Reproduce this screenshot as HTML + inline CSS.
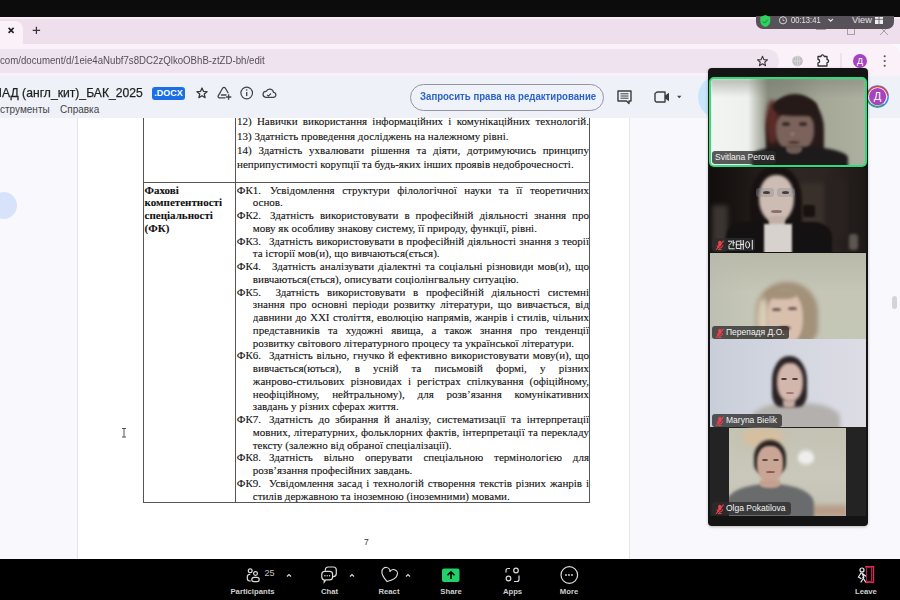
<!DOCTYPE html><html><head><meta charset="utf-8"><style>
*{margin:0;padding:0;box-sizing:border-box}
html,body{width:900px;height:600px;overflow:hidden;background:#f9f9fd;font-family:"Liberation Sans",sans-serif;position:relative}
.a{position:absolute}
.ln{position:absolute;font-family:"Liberation Serif",serif;font-size:11px;line-height:12px;height:12px;white-space:nowrap;color:#111;-webkit-text-stroke:0.1px #111}
.j{text-align:justify;text-align-last:justify;white-space:normal;overflow:hidden}
.b{font-weight:bold}
svg{position:absolute;overflow:visible}
.lbl{position:absolute;height:13px;background:rgba(45,45,45,0.78);border-radius:3px;color:#f2f2f2;font-size:8.5px;line-height:13px;white-space:nowrap;padding:0 3px}
.tb{position:absolute;color:#cfcfcf;font-size:7.7px;line-height:10px;text-align:center;width:60px;font-weight:bold}
</style></head><body>
<div class="a" style="left:0;top:0;width:900px;height:16.8px;background:#0c0c0c"></div>
<div class="a" style="left:0;top:16.8px;width:900px;height:27.2px;background:#efdfec"></div>
<div class="a" style="left:0;top:16.8px;width:900px;height:2px;background:#f7ecf4"></div>
<div class="a" style="left:-10px;top:21px;width:33px;height:23px;background:#fbf1f9;border-radius:0 8px 0 0"></div>
<svg style="left:0;top:0" width="900" height="60"><g stroke="#222" stroke-width="1.6" fill="none"><path d="M8.6 27.9L13.6 32.9M13.6 27.9L8.6 32.9"/></g><g stroke="#3d343c" stroke-width="1.25"><path d="M36.4 26.7v7.4M32.7 30.4h7.4"/></g></svg>
<div class="a" style="left:0;top:44px;width:900px;height:32px;background:#fbf2f9;border-radius:0 10px 0 0"></div>
<div class="a" style="left:-20px;top:49px;width:799px;height:24px;background:#efe3ef;border-radius:12px"></div>
<div class="a" style="left:0;top:53px;font-size:11.3px;line-height:14px;color:#554e58;white-space:nowrap;transform-origin:0 0;transform:scaleX(0.855)">com/document/d/1eie4aNubf7s8DC2zQlkoOBhB-ztZD-bh/edit</div>
<svg style="left:0;top:0" width="900" height="80"><polygon points="762.50,56.30 763.88,59.61 767.45,59.89 764.73,62.22 765.56,65.71 762.50,63.84 759.44,65.71 760.27,62.22 757.55,59.89 761.12,59.61" fill="none" stroke="#3a3a3a" stroke-width="1.1" stroke-linejoin="round"/><circle cx="797.5" cy="61" r="5.3" fill="#bdbdbd"/><g stroke="#e2e2e2" stroke-width="0.6" fill="none"><path d="M792.2 61h10.6M797.5 55.7v10.6"/><ellipse cx="797.5" cy="61" rx="2.3" ry="5.3"/></g><path d="M818 56.5h3a1.6 1.6 0 0 1 3.2 0h2.8v3a1.6 1.6 0 0 1 0 3.2v3.3h-9v-3.2a1.6 1.6 0 0 0 0-3.3z" fill="none" stroke="#333" stroke-width="1.3" stroke-linejoin="round"/><path d="M841 53v16" stroke="#e0d3de" stroke-width="1"/><circle cx="860" cy="61" r="7" fill="#a542c0"/><g fill="#555"><circle cx="884.7" cy="56.3" r="1.05"/><circle cx="884.7" cy="61" r="1.05"/><circle cx="884.7" cy="65.7" r="1.05"/></g></svg>
<div class="a" style="left:855px;top:55px;width:10px;text-align:center;color:#fff;font-size:9px;line-height:12px">Д</div>
<svg style="left:0;top:0" width="900" height="40"><g stroke="#a89ea6" stroke-width="1" fill="none"><path d="M816 29.5h10"/><rect x="847.5" y="27.5" width="7" height="7"/><path d="M880 27l8 8M888 27l-8 8"/></g></svg>
<div class="a" style="left:755.6px;top:10px;width:138px;height:19px;background:#57525a;border-radius:0 0 7px 7px"></div>
<div class="a" style="left:755px;top:0;width:140px;height:16px;background:#0c0c0c"></div>
<svg style="left:0;top:0" width="900" height="40"><path d="M765.3 15l5 2v4c0 3-2.2 5.2-5 6-2.8-0.8-5-3-5-6v-4z" fill="#2ed35c"/><path d="M762.8 21.3l1.8 1.8 3.2-3.4" stroke="#1a7a35" stroke-width="1" fill="none"/><circle cx="783" cy="20.3" r="3.6" fill="none" stroke="#d5d5d5" stroke-width="1"/><path d="M783 18.6v1.9h1.4" stroke="#d5d5d5" stroke-width="0.8" fill="none"/><path d="M828.5 19l2.2 2.2 2.2-2.2" stroke="#e6e6e6" stroke-width="1.1" fill="none"/><g fill="#eeeeee"><rect x="875" y="17" width="8" height="7"/></g><g stroke="#57525a" stroke-width="0.8"><path d="M879 17v7M875 19.3h8"/></g></svg>
<div class="a" style="left:791px;top:15px;font-size:9.3px;line-height:11px;color:#e3e3e3;white-space:nowrap;transform-origin:0 0;transform:scaleX(0.82)">00:13:41</div>
<div class="a" style="left:852px;top:15px;font-size:9.3px;line-height:11px;color:#e3e3e3;white-space:nowrap">View</div>
<div class="a" style="left:0;top:76px;width:900px;height:41.5px;background:#eff1f9"></div>
<div class="a" style="left:1.5px;top:86px;font-size:12.6px;line-height:14px;color:#1f1f1f;white-space:nowrap;transform-origin:0 0;transform:scaleX(0.965);-webkit-text-stroke:0.25px #1f1f1f">АД (англ_кит)_БАК_2025</div><div class="a" style="left:-0.2px;top:88px;width:1.3px;height:9px;background:#333"></div>
<div class="a" style="left:151.7px;top:86.7px;width:33.6px;height:13.3px;background:#1b6fe6;border-radius:3px;color:#fff;font-size:9px;font-weight:bold;line-height:13.3px;text-align:center">.DOCX</div>
<div class="a" style="left:0;top:104px;font-size:10px;line-height:12px;color:#444;white-space:nowrap">струменты</div>
<div class="a" style="left:60px;top:104px;font-size:10px;line-height:12px;color:#444;white-space:nowrap">Справка</div>
<svg style="left:0;top:0" width="900" height="120"><polygon points="202.00,88.00 203.40,91.37 207.04,91.66 204.27,94.04 205.12,97.59 202.00,95.69 198.88,97.59 199.73,94.04 196.96,91.66 200.60,91.37" fill="none" stroke="#3a3a3a" stroke-width="1.3" stroke-linejoin="round"/><path d="M222.6 88.2a1.6 1.6 0 0 1 2.8 0l2.6 4.6M220.3 92.3l-2 3.4a1.4 1.4 0 0 0 1.2 2.1h5.5M221.4 95h4.6M222.6 88.2l-2.3 4.1" fill="none" stroke="#444" stroke-width="1.3" stroke-linecap="round" stroke-linejoin="round"/><path d="M228.6 94.3v5.4M225.9 97h5.4" stroke="#444" stroke-width="1.3"/><circle cx="246.7" cy="93" r="5.8" fill="none" stroke="#444" stroke-width="1.2"/><path d="M246.7 92v4" stroke="#444" stroke-width="1.3"/><circle cx="246.7" cy="90" r="0.8" fill="#444"/><path d="M265.8 97.3h7.4a2.5 2.5 0 0 0 0.3-5a3.8 3.8 0 0 0-7.2-1a2.9 2.9 0 0 0-0.5 6z" fill="none" stroke="#444" stroke-width="1.25" stroke-linejoin="round"/><path d="M267 94.8l1.4 1.3 2.6-2.6" stroke="#444" stroke-width="1.1" fill="none"/></svg>
<div class="a" style="left:410px;top:83.5px;width:194px;height:27px;border:1px solid #94949e;border-radius:14px;background:#f0f2f9"></div>
<div class="a" style="left:420px;top:91px;font-size:10px;font-weight:bold;line-height:12px;color:#2c63c9;white-space:nowrap;transform-origin:0 0;transform:scaleX(0.962)">Запросить права на редактирование</div>
<svg style="left:0;top:0" width="900" height="120"><path d="M618 91h13v10h-2v2.5l-2.5-2.5h-8.5z" fill="none" stroke="#3c3c3c" stroke-width="1.4" stroke-linejoin="round"/><path d="M620.5 93.8h8M620.5 96h8M620.5 98.2h8" stroke="#3c3c3c" stroke-width="1"/><path d="M657 92h8v10h-8.5a2 2 0 0 1-1.5-1.5v-7z" fill="none" stroke="#3c3c3c" stroke-width="1.4" stroke-linejoin="round"/><path d="M665 95.5l4-2.8v8.6l-4-2.8z" fill="#3c3c3c"/><path d="M677 95.8h4.5l-2.25 2.5z" fill="#444"/><circle cx="720" cy="97" r="22" fill="#c8e6fb"/><circle cx="877.6" cy="96.6" r="10.6" fill="none" stroke="#4285f4" stroke-width="1.4"/><path d="M867.2 96.6A10.4 10.4 0 0 1 887.9 95.5" fill="none" stroke="#ea4335" stroke-width="1.4"/><path d="M868 100.5A10.4 10.4 0 0 0 884 104" fill="none" stroke="#34a853" stroke-width="1.4"/><circle cx="877.6" cy="96.6" r="8.6" fill="#a643c2"/></svg>
<div class="a" style="left:871px;top:90px;width:13px;text-align:center;color:#fff;font-size:11px;line-height:13px">Д</div>
<div class="a" style="left:0;top:117.5px;width:900px;height:442px;background:#f9f9fd"></div>
<div class="a" style="left:76.8px;top:117.5px;width:553px;height:442px;background:#fff;border-left:1px solid #e4e4e8;border-right:1px solid #e4e4e8"></div>
<div class="a" style="left:-10px;top:191.5px;width:27px;height:27px;border-radius:14px;background:#d7e3fb"></div>
<div class="a" style="left:891.5px;top:295.5px;width:5.5px;height:13px;border-radius:3px;background:#d4d4d8"></div>
<svg style="left:0;top:0" width="900" height="600"><path d="M122 428.5h4M124 428.5v8.5M122 437h4" stroke="#555" stroke-width="1" fill="none"/></svg>
<div class="a" style="left:143px;top:117.5px;width:1px;height:385px;background:#555"></div>
<div class="a" style="left:235px;top:117.5px;width:1px;height:385px;background:#555"></div>
<div class="a" style="left:588.6px;top:117.5px;width:1px;height:385px;background:#555"></div>
<div class="a" style="left:143px;top:182px;width:446.5px;height:1px;background:#555"></div>
<div class="a" style="left:143px;top:501.7px;width:446.5px;height:1px;background:#555"></div>
<div class="ln j" style="left:237px;top:115.19px;width:352.0px">12) Навички використання інформаційних і комунікаційних технологій.</div>
<div class="ln" style="left:237px;top:129.59px">13) Здатність проведення досліджень на належному рівні.</div>
<div class="ln j" style="left:237px;top:144.19px;width:352.0px">14) Здатність ухвалювати рішення та діяти, дотримуючись принципу</div>
<div class="ln" style="left:237px;top:158.29px">неприпустимості корупції та будь-яких інших проявів недоброчесності.</div>
<div class="ln b" style="left:144.6px;top:183.59px">Фахові</div>
<div class="ln b" style="left:144.6px;top:196.29px">компетентності</div>
<div class="ln b" style="left:144.6px;top:208.99px">спеціальності</div>
<div class="ln b" style="left:144.6px;top:221.69px">(ФК)</div>
<div class="ln" style="left:236.8px;top:183.59px">ФК1.</div>
<div class="ln j" style="left:270px;top:183.59px;width:319.0px">Усвідомлення структури філологічної науки та її теоретичних</div>
<div class="ln" style="left:252.8px;top:196.34px">основ.</div>
<div class="ln" style="left:236.8px;top:209.09px">ФК2.</div>
<div class="ln j" style="left:270px;top:209.09px;width:319.0px">Здатність використовувати в професійній діяльності знання про</div>
<div class="ln" style="left:252.8px;top:221.84px">мову як особливу знакову систему, її природу, функції, рівні.</div>
<div class="ln" style="left:236.8px;top:234.59px">ФК3.</div>
<div class="ln j" style="left:269px;top:234.59px;width:320.0px">Здатність використовувати в професійній діяльності знання з теорії</div>
<div class="ln" style="left:252.8px;top:247.34px">та історії мов(и), що вивчаються(ється).</div>
<div class="ln" style="left:236.8px;top:260.09px">ФК4.</div>
<div class="ln j" style="left:272px;top:260.09px;width:317.0px">Здатність аналізувати діалектні та соціальні різновиди мов(и), що</div>
<div class="ln" style="left:252.8px;top:272.84px">вивчаються(ється), описувати соціолінгвальну ситуацію.</div>
<div class="ln" style="left:236.8px;top:285.59px">ФК5.</div>
<div class="ln j" style="left:275.4px;top:285.59px;width:313.6px">Здатність використовувати в професійній діяльності системні</div>
<div class="ln j" style="left:252.8px;top:298.34px;width:336.2px">знання про основні періоди розвитку літератури, що вивчається, від</div>
<div class="ln j" style="left:252.8px;top:311.09px;width:336.2px">давнини до XXI століття, еволюцію напрямів, жанрів і стилів, чільних</div>
<div class="ln j" style="left:252.8px;top:323.84px;width:336.2px">представників та художні явища, а також знання про тенденції</div>
<div class="ln" style="left:252.8px;top:336.59px">розвитку світового літературного процесу та української літератури.</div>
<div class="ln" style="left:236.8px;top:349.34px">ФК6.</div>
<div class="ln j" style="left:269px;top:349.34px;width:320.0px">Здатність вільно, гнучко й ефективно використовувати мову(и), що</div>
<div class="ln j" style="left:252.8px;top:362.09px;width:336.2px">вивчається(ються), в усній та письмовій формі, у різних</div>
<div class="ln j" style="left:252.8px;top:374.84px;width:336.2px">жанрово-стильових різновидах і регістрах спілкування (офіційному,</div>
<div class="ln j" style="left:252.8px;top:387.59px;width:336.2px">неофіційному, нейтральному), для розв’язання комунікативних</div>
<div class="ln" style="left:252.8px;top:400.34px">завдань у різних сферах життя.</div>
<div class="ln" style="left:236.8px;top:413.09px">ФК7.</div>
<div class="ln j" style="left:269px;top:413.09px;width:320.0px">Здатність до збирання й аналізу, систематизації та інтерпретації</div>
<div class="ln j" style="left:252.8px;top:425.84px;width:336.2px">мовних, літературних, фольклорних фактів, інтерпретації та перекладу</div>
<div class="ln" style="left:252.8px;top:438.59px">тексту (залежно від обраної спеціалізації).</div>
<div class="ln" style="left:236.8px;top:451.34px">ФК8.</div>
<div class="ln j" style="left:269px;top:451.34px;width:320.0px">Здатність вільно оперувати спеціальною термінологією для</div>
<div class="ln" style="left:252.8px;top:464.09px">розв’язання професійних завдань.</div>
<div class="ln" style="left:236.8px;top:476.84px">ФК9.</div>
<div class="ln j" style="left:269px;top:476.84px;width:320.0px">Усвідомлення засад і технологій створення текстів різних жанрів і</div>
<div class="ln" style="left:252.8px;top:489.59px">стилів державною та іноземною (іноземними) мовами.</div>
<div class="a" style="left:364px;top:537px;font-size:8.5px;line-height:10px;color:#333">7</div>
<div class="a" style="left:0;top:559px;width:900px;height:41px;background:#000"></div>
<div class="tb" style="left:222.5px;top:587px">Participants</div>
<div class="tb" style="left:299.5px;top:587px">Chat</div>
<div class="tb" style="left:359px;top:587px">React</div>
<div class="tb" style="left:421px;top:587px">Share</div>
<div class="tb" style="left:482.5px;top:587px">Apps</div>
<div class="tb" style="left:539px;top:587px">More</div>
<div class="tb" style="left:836px;top:587px">Leave</div>
<svg style="left:0;top:0" width="900" height="600"><g fill="none" stroke="#dcdcdc" stroke-width="1.2"><circle cx="250.2" cy="570.8" r="1.9"/><path d="M250.3 574.3h-0.6a2.4 2.4 0 0 0-2.4 2.4v1.9a2.4 2.4 0 0 0 2.4 2.4h1.2"/><circle cx="255.5" cy="573.5" r="1.9"/><rect x="251.8" y="577.3" width="7.4" height="4.3" rx="2.15"/><path d="M287 576.5l2-2 2 2M350 576.5l2-2 2 2M406 576.5l2-2 2 2"/><path d="M324.8 571.3h4.8a3 3 0 0 1 3 3v2.6a3 3 0 0 1-3 3h-3.8l-1.6 2.2v-2.2a3 3 0 0 1-2.4-3v-2.6a3 3 0 0 1 3-3z"/><path d="M325.3 570.8v-0.8a3 3 0 0 1 3-3h5a3 3 0 0 1 3 3v3.6a3 3 0 0 1-3 3h-0.6"/><path transform="rotate(16 389 575)" d="M389 581.8c-5.5-3.4-7.8-6-7.8-8.7a3.9 3.9 0 0 1 7.8-1.4a3.9 3.9 0 0 1 7.8 1.4c0 2.7-2.3 5.3-7.8 8.7z"/><path d="M506 572.5v-2a2 2 0 0 1 2-2h2M519 575.5v4a2 2 0 0 1-2 2h-3"/><circle cx="516" cy="570.5" r="2.3"/><circle cx="508.5" cy="578.5" r="2.3"/><circle cx="569.3" cy="575" r="8.3"/></g><g fill="#dcdcdc"><circle cx="566" cy="575" r="0.9"/><circle cx="569" cy="575" r="0.9"/><circle cx="572" cy="575" r="0.9"/><circle cx="324.9" cy="575.7" r="0.7"/><circle cx="327.2" cy="575.7" r="0.7"/><circle cx="329.5" cy="575.7" r="0.7"/></g><rect x="442" y="568.5" width="17.5" height="13.5" rx="2" fill="#22d06a"/><path d="M451 579v-7M447.5 575.3l3.5-3.5 3.5 3.5" stroke="#000" stroke-width="1.6" fill="none"/><path d="M865 566.8h8.5v15.5h-8.5" fill="none" stroke="#e8245a" stroke-width="1.4"/><path d="M866.5 567.5l5-0.5v15l-5-0.8z" fill="none" stroke="#b81e48" stroke-width="1"/><g fill="none" stroke="#eeeeee" stroke-width="1.2" stroke-linecap="round"><circle cx="862" cy="570" r="2"/><path d="M861 573l-2.5 4 2.5 1.5M862 573l1.8 4.5-2.8 4.5M862.8 577.5l2.5 4M863 574l2.5 2"/></g></svg>
<div class="a" style="left:264.6px;top:567.6px;font-size:9px;line-height:11px;color:#c4c4c4">25</div>
<div class="a" style="left:707.6px;top:67.6px;width:160.6px;height:458px;background:#141414;border-radius:4px;box-shadow:0 1px 3px rgba(0,0,0,.25)"></div>
<div class="a" style="left:711px;top:79px;width:153.6px;height:85.5px;overflow:hidden"><div class="a" style="left:0px;top:0px;width:154px;height:86px;background:linear-gradient(90deg,#f3f5f3 0%,#eef0ee 24%,#b9bcb1 31%,#8a8d80 37%,#8f9284 50%,#a5a797 72%,#adaf9f 100%);border-radius:0;"></div><div class="a" style="left:0px;top:0px;width:154px;height:18px;background:linear-gradient(180deg,rgba(120,125,110,.45),rgba(0,0,0,0));border-radius:0;filter:blur(1px);"></div><div class="a" style="left:55px;top:15px;width:58px;height:74px;background:#271b19;border-radius:48% 48% 18% 18%;filter:blur(1.8px);"></div><div class="a" style="left:55px;top:21px;width:13px;height:44px;background:#5a2c28;border-radius:50%;filter:blur(2.2px);"></div><div class="a" style="left:65px;top:32px;width:38px;height:41px;background:#7b635c;border-radius:40% 40% 48% 48%;filter:blur(1.6px);"></div><div class="a" style="left:62px;top:18px;width:44px;height:19px;background:#261a18;border-radius:50% 50% 25% 45%;filter:blur(1.4px);"></div><div class="a" style="left:71px;top:43px;width:8px;height:3.5px;background:#3a2a26;border-radius:50%;filter:blur(0.8px);"></div><div class="a" style="left:88px;top:43px;width:8px;height:3.5px;background:#3a2a26;border-radius:50%;filter:blur(0.8px);"></div><div class="a" style="left:79px;top:53px;width:5px;height:4px;background:#8f766e;border-radius:50%;filter:blur(0.8px);"></div><div class="a" style="left:77px;top:62px;width:12px;height:3px;background:#4e3530;border-radius:50%;filter:blur(0.8px);"></div><div class="a" style="left:41px;top:68px;width:96px;height:24px;background:#1c1a1b;border-radius:35% 45% 0 0;filter:blur(1.6px);"></div><div class="a" style="left:75px;top:67px;width:16px;height:8px;background:#6f5a54;border-radius:0 0 50% 50%;filter:blur(1.2px);"></div></div>
<div class="a" style="left:709px;top:77px;width:157.6px;height:89.5px;border:2px solid #2edc7a;border-radius:5px"></div>
<div class="a" style="left:710px;top:167.5px;width:156px;height:84.5px;overflow:hidden"><div class="a" style="left:-1px;top:0.0px;width:158px;height:85px;background:linear-gradient(90deg,#110d0c 0%,#1c1715 22%,#2f2724 48%,#2d2522 72%,#1d1816 100%);border-radius:0;"></div><div class="a" style="left:2px;top:37.5px;width:16px;height:47px;background:#3b3430;border-radius:3px;filter:blur(2.5px);"></div><div class="a" style="left:87px;top:15.5px;width:28px;height:62px;background:#3a302b;border-radius:3px;filter:blur(2.5px);"></div><div class="a" style="left:116px;top:10.5px;width:20px;height:60px;background:#2a2220;border-radius:3px;filter:blur(2.5px);"></div><div class="a" style="left:93px;top:37.5px;width:12px;height:12px;background:#171210;border-radius:2px;filter:blur(1px);"></div><div class="a" style="left:139px;top:66.5px;width:9px;height:16px;background:#5e5650;border-radius:3px;filter:blur(1.5px);"></div><div class="a" style="left:40px;top:-1.5px;width:52px;height:78px;background:#171211;border-radius:45% 45% 12% 12%;filter:blur(1.8px);"></div><div class="a" style="left:49px;top:7.5px;width:35px;height:48px;background:#cdbcb3;border-radius:46% 46% 50% 50%;filter:blur(1.5px);"></div><div class="a" style="left:46px;top:20.5px;width:18px;height:9px;background:rgba(140,140,150,.4);border-radius:3px;filter:blur(0.7px);"></div><div class="a" style="left:67px;top:20.5px;width:18px;height:9px;background:rgba(140,140,150,.4);border-radius:3px;filter:blur(0.7px);"></div><div class="a" style="left:53px;top:23.5px;width:7px;height:3px;background:#4a3c38;border-radius:50%;filter:blur(0.7px);"></div><div class="a" style="left:72px;top:23.5px;width:7px;height:3px;background:#4a3c38;border-radius:50%;filter:blur(0.7px);"></div><div class="a" style="left:61px;top:42.5px;width:11px;height:2.5px;background:#8e6e68;border-radius:50%;filter:blur(0.7px);"></div><div class="a" style="left:59px;top:48.5px;width:16px;height:14px;background:#c2b0a8;border-radius:0 0 40% 40%;filter:blur(1.2px);"></div><div class="a" style="left:52px;top:56.5px;width:32px;height:32px;background:#d8d2ce;border-radius:0 0 0 0;filter:blur(1.2px);"></div><div class="a" style="left:16px;top:54.5px;width:38px;height:34px;background:#141112;border-radius:45% 0 0 0;filter:blur(1.3px);"></div><div class="a" style="left:82px;top:54.5px;width:40px;height:34px;background:#141112;border-radius:0 45% 0 0;filter:blur(1.3px);"></div></div>
<div class="a" style="left:710px;top:252.4px;width:156px;height:86.8px;overflow:hidden"><div class="a" style="left:-1px;top:0.5999999999999943px;width:158px;height:87px;background:linear-gradient(180deg,#b8b9a8 0%,#c5c6b6 45%,#c4c6b6 100%);border-radius:0;"></div><div class="a" style="left:-1px;top:0.5999999999999943px;width:40px;height:87px;background:linear-gradient(90deg,rgba(185,187,175,.6),rgba(0,0,0,0));border-radius:0;"></div><div class="a" style="left:46px;top:29.599999999999994px;width:62px;height:62px;background:#a3917a;border-radius:48% 48% 25% 25%;filter:blur(2.2px);"></div><div class="a" style="left:47px;top:45.599999999999994px;width:12px;height:44px;background:#d9cdb8;border-radius:50%;filter:blur(2.5px);"></div><div class="a" style="left:57px;top:38.599999999999994px;width:36px;height:54px;background:#d8bfae;border-radius:45% 45% 45% 45%;filter:blur(1.8px);"></div><div class="a" style="left:57px;top:36.599999999999994px;width:30px;height:10px;background:#a3917a;border-radius:50% 20% 40% 40%;filter:blur(1.5px);"></div><div class="a" style="left:62px;top:55.599999999999994px;width:9px;height:3px;background:#6a5a54;border-radius:50%;filter:blur(0.8px);"></div><div class="a" style="left:78px;top:54.599999999999994px;width:9px;height:3px;background:#6a5a54;border-radius:50%;filter:blur(0.8px);"></div><div class="a" style="left:69px;top:73.6px;width:12px;height:4px;background:#8a5a50;border-radius:50%;filter:blur(0.8px);"></div></div>
<div class="a" style="left:710px;top:339.2px;width:156px;height:88px;overflow:hidden"><div class="a" style="left:-1px;top:-1.1999999999999886px;width:158px;height:90px;background:linear-gradient(90deg,#c8ced9 0%,#d3d6e0 45%,#dcdce4 100%);border-radius:0;"></div><div class="a" style="left:42px;top:63.80000000000001px;width:88px;height:32px;background:#b3b0ad;border-radius:45% 45% 0 0;filter:blur(2px);"></div><div class="a" style="left:62px;top:16.80000000000001px;width:35px;height:51px;background:#2a2325;border-radius:48% 48% 25% 25%;filter:blur(1.6px);"></div><div class="a" style="left:66.5px;top:23.80000000000001px;width:26px;height:39px;background:#d3b6ac;border-radius:45% 45% 48% 48%;filter:blur(1.4px);"></div><div class="a" style="left:71px;top:38.80000000000001px;width:6px;height:2.5px;background:#4a3a38;border-radius:50%;filter:blur(0.7px);"></div><div class="a" style="left:82px;top:38.80000000000001px;width:6px;height:2.5px;background:#4a3a38;border-radius:50%;filter:blur(0.7px);"></div><div class="a" style="left:76px;top:52.80000000000001px;width:8px;height:2px;background:#9a7a74;border-radius:50%;filter:blur(0.7px);"></div><div class="a" style="left:73px;top:60.80000000000001px;width:12px;height:8px;background:#c7aca4;border-radius:0 0 40% 40%;filter:blur(1.5px);"></div></div>
<div class="a" style="left:710px;top:427.2px;width:156px;height:88.8px;background:#232323"></div>
<div class="a" style="left:728.6px;top:427.2px;width:117.7px;height:88.8px;overflow:hidden"><div class="a" style="left:0.39999999999997726px;top:0.8000000000000114px;width:118px;height:88px;background:linear-gradient(180deg,#c3c2b3 0%,#c9c8ba 55%,#c2c1b4 100%);border-radius:0;"></div><div class="a" style="left:13.399999999999977px;top:0.8000000000000114px;width:42px;height:20px;background:#d6be9e;border-radius:50%;filter:blur(3.5px);"></div><div class="a" style="left:68.39999999999998px;top:21.80000000000001px;width:18px;height:17px;background:#dcdcd8;border-radius:50%;filter:blur(1.8px);"></div><div class="a" style="left:70.39999999999998px;top:24.80000000000001px;width:14px;height:11px;background:#eeeeea;border-radius:50%;filter:blur(1.2px);"></div><div class="a" style="left:83.39999999999998px;top:77.80000000000001px;width:35px;height:12px;background:#b89e8a;border-radius:0;filter:blur(2px);"></div><div class="a" style="left:-2.6000000000000227px;top:56.80000000000001px;width:88px;height:40px;background:#6a6b6d;border-radius:48% 48% 0 0;filter:blur(1.6px);"></div><div class="a" style="left:25.399999999999977px;top:12.800000000000011px;width:32px;height:34px;background:#2a2422;border-radius:50% 50% 30% 30%;filter:blur(1.4px);"></div><div class="a" style="left:28.399999999999977px;top:18.80000000000001px;width:26px;height:37px;background:#c9a596;border-radius:42% 42% 48% 48%;filter:blur(1.3px);"></div><div class="a" style="left:33.39999999999998px;top:31.80000000000001px;width:6px;height:2.5px;background:#5a4440;border-radius:50%;filter:blur(0.6px);"></div><div class="a" style="left:44.39999999999998px;top:31.80000000000001px;width:6px;height:2.5px;background:#5a4440;border-radius:50%;filter:blur(0.6px);"></div><div class="a" style="left:37.39999999999998px;top:43.80000000000001px;width:9px;height:2.5px;background:#8a5a50;border-radius:50%;filter:blur(0.6px);"></div><div class="a" style="left:31.399999999999977px;top:52.80000000000001px;width:20px;height:8px;background:#c4a090;border-radius:0 0 40% 40%;filter:blur(1.2px);"></div></div>
<div class="lbl" style="left:712px;top:150.8px;width:64px">Svitlana Perova</div>
<div class="lbl" style="left:712px;top:238px;width:43px"><svg style="left:2.5px;top:2px" width="10" height="10"><rect x="3.2" y="0.8" width="3.2" height="5.6" rx="1.6" fill="#f04050"/><path d="M2 5.2a2.8 2.8 0 0 0 5.6 0M4.8 8v1.5M3 9.5h3.6" stroke="#f04050" stroke-width="0.9" fill="none"/><path d="M1.2 9.6L8.6 0.6" stroke="#f04050" stroke-width="1.1"/></svg><span style="position:absolute;left:14px;top:0"></span></div>
<div class="lbl" style="left:712px;top:326px;width:77px"><svg style="left:2.5px;top:2px" width="10" height="10"><rect x="3.2" y="0.8" width="3.2" height="5.6" rx="1.6" fill="#f04050"/><path d="M2 5.2a2.8 2.8 0 0 0 5.6 0M4.8 8v1.5M3 9.5h3.6" stroke="#f04050" stroke-width="0.9" fill="none"/><path d="M1.2 9.6L8.6 0.6" stroke="#f04050" stroke-width="1.1"/></svg><span style="position:absolute;left:14px;top:0">Перепадя Д.О.</span></div>
<div class="lbl" style="left:712px;top:414.3px;width:70px"><svg style="left:2.5px;top:2px" width="10" height="10"><rect x="3.2" y="0.8" width="3.2" height="5.6" rx="1.6" fill="#f04050"/><path d="M2 5.2a2.8 2.8 0 0 0 5.6 0M4.8 8v1.5M3 9.5h3.6" stroke="#f04050" stroke-width="0.9" fill="none"/><path d="M1.2 9.6L8.6 0.6" stroke="#f04050" stroke-width="1.1"/></svg><span style="position:absolute;left:14px;top:0">Maryna Bielik</span></div>
<div class="lbl" style="left:712px;top:501.5px;width:79px"><svg style="left:2.5px;top:2px" width="10" height="10"><rect x="3.2" y="0.8" width="3.2" height="5.6" rx="1.6" fill="#f04050"/><path d="M2 5.2a2.8 2.8 0 0 0 5.6 0M4.8 8v1.5M3 9.5h3.6" stroke="#f04050" stroke-width="0.9" fill="none"/><path d="M1.2 9.6L8.6 0.6" stroke="#f04050" stroke-width="1.1"/></svg><span style="position:absolute;left:14px;top:0">Olga Pokatilova</span></div>
<svg style="left:0;top:0" width="900" height="600"><g stroke="#ececec" stroke-width="1" fill="none" stroke-linecap="square"><path d="M728.5 241.2h3.2c0 1.8-0.8 3-2.6 3.8M733.2 240.5v5.2M733.2 242.8h1.3M729 246.3v2.5h5.2"/><path d="M739.5 241.2h-3.2v7.3h3.6M736.3 244.8h3M740.8 240.5v8.6M743.3 240.5v8.6M740.8 244.5h2.5"/><ellipse cx="747.6" cy="244.8" rx="2" ry="3.2"/><path d="M752.3 240.5v8.6"/></g></svg>
</body></html>
